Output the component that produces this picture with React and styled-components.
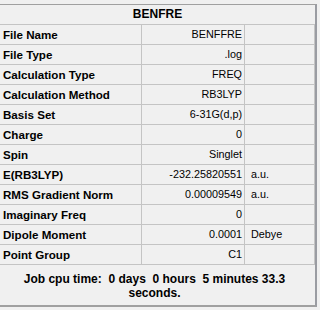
import React from "react";
import styled, { createGlobalStyle } from "styled-components";

const GlobalStyle = createGlobalStyle`
  html, body {
    margin: 0;
    padding: 0;
    background: #f0f0f0;
  }
  body {
    font-family: "Liberation Sans", Arial, sans-serif;
    color: #000;
  }
`;

const rows = [
  { label: "File Name", value: "BENFFRE" },
  { label: "File Type", value: ".log" },
  { label: "Calculation Type", value: "FREQ" },
  { label: "Calculation Method", value: "RB3LYP" },
  { label: "Basis Set", value: "6-31G(d,p)" },
  { label: "Charge", value: "0" },
  { label: "Spin", value: "Singlet" },
  { label: "E(RB3LYP)", value: "-232.25820551", unit: "a.u." },
  { label: "RMS Gradient Norm", value: "0.00009549", unit: "a.u." },
  { label: "Imaginary Freq", value: "0" },
  { label: "Dipole Moment", value: "0.0001", unit: "Debye" },
  { label: "Point Group", value: "C1" },
];

const Frame = styled.div`
  margin-top: 4px;
  width: 315px;
  border-top: 1px solid #a0a0a0;
  border-right: 2px solid #9a9ca2;
  border-bottom: 2px solid #a0a0a0;
  background: #f0f0f0;
`;

const Title = styled.div`
  height: 19px;
  line-height: 19px;
  border-bottom: 1px solid #c4c4c4;
  text-align: center;
  font-size: 12px;
  font-weight: bold;
`;

const Row = styled.div`
  display: grid;
  grid-template-columns: 142px 103px 1fr;
  height: 19px;
  line-height: 19px;
  border-bottom: 1px solid #c4c4c4;
`;

const Cell = styled.div`
  border-right: 1px solid #c4c4c4;
  white-space: nowrap;
`;

const Label = styled(Cell)`
  padding-left: 3px;
  font-size: 11.6px;
  font-weight: bold;
`;

const Value = styled(Cell)`
  padding-right: 2px;
  text-align: right;
  font-size: 10.8px;
`;

const Unit = styled(Cell)`
  padding-left: 6px;
  font-size: 10.8px;
`;

const Footer = styled.div`
  height: 40px;
  padding-top: 7px;
  box-sizing: border-box;
  text-align: center;
  font-size: 12px;
  font-weight: bold;
  line-height: 14px;
`;

const FooterLine = styled.div`
  white-space: pre;
  padding-right: 6px;
`;

const App = () => (
  <>
    <GlobalStyle />
    <Frame>
      <Title>BENFRE</Title>
      {rows.map((row) => (
        <Row key={row.label}>
          <Label>{row.label}</Label>
          <Value>{row.value}</Value>
          <Unit>{row.unit || ""}</Unit>
        </Row>
      ))}
      <Footer>
        <FooterLine>{"Job cpu time:  0 days  0 hours  5 minutes 33.3"}</FooterLine>
        <FooterLine>seconds.</FooterLine>
      </Footer>
    </Frame>
  </>
);

export default App;
